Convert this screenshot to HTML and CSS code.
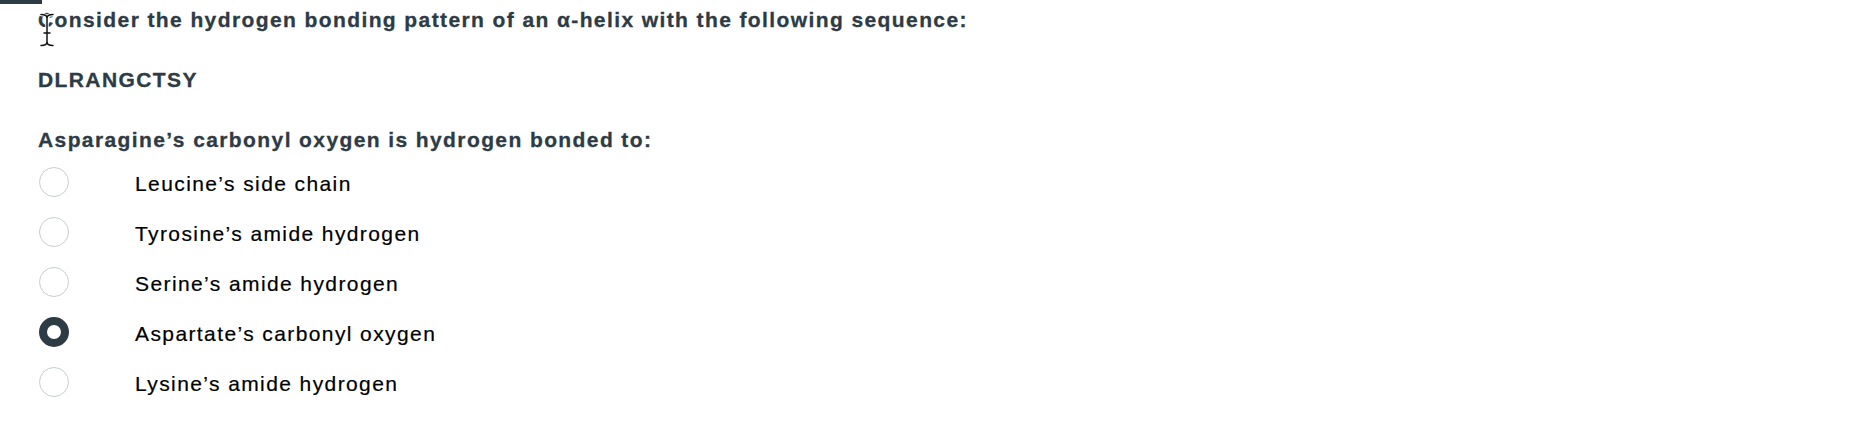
FILE: index.html
```html
<!DOCTYPE html>
<html lang="en">
<head>
<meta charset="utf-8">
<title>Question</title>
<link rel="stylesheet" href="styles.css">
</head>
<body>
<div class="topbar"></div>
<div class="question">
  <p class="q-text">Consider the hydrogen bonding pattern of an α-helix with the following sequence:</p>
  <p class="q-text">DLRANGCTSY</p>
  <p class="q-text">Asparagine’s carbonyl oxygen is hydrogen bonded to:</p>
  <ul class="options">
    <li class="option"><span class="radio"></span><span class="label">Leucine’s side chain</span></li>
    <li class="option"><span class="radio"></span><span class="label">Tyrosine’s amide hydrogen</span></li>
    <li class="option"><span class="radio"></span><span class="label">Serine’s amide hydrogen</span></li>
    <li class="option"><span class="radio checked"></span><span class="label">Aspartate’s carbonyl oxygen</span></li>
    <li class="option"><span class="radio"></span><span class="label">Lysine’s amide hydrogen</span></li>
  </ul>
  <svg class="cursor" width="18" height="36" viewBox="0 0 18 36" aria-hidden="true">
    <g fill="none" stroke="#fff" stroke-width="3.4" stroke-linecap="round">
      <path d="M3 2.5 Q9 2.5 9 6 Q9 2.5 15 2.5"/>
      <path d="M9 6 V30"/>
      <path d="M3 33.5 Q9 33.5 9 30 Q9 33.5 15 33.5"/>
      <path d="M6 21 H12"/>
    </g>
    <g fill="none" stroke="#111" stroke-width="1.5" stroke-linecap="round">
      <path d="M3 2.5 Q9 2.5 9 6 Q9 2.5 15 2.5"/>
      <path d="M9 6 V30"/>
      <path d="M3 33.5 Q9 33.5 9 30 Q9 33.5 15 33.5"/>
      <path d="M6 21 H12"/>
    </g>
  </svg>
</div>
</body>
</html>
```

FILE: styles.css
```css
html, body {
  margin: 0;
  padding: 0;
  background: #fff;
}

body {
  font-family: "Liberation Sans", Arial, Helvetica, sans-serif;
  font-size: 21px;
  letter-spacing: 1.4px;
}

.topbar {
  width: 42px;
  height: 4px;
  background: #2d3b45;
}

.question {
  position: relative;
  padding: 1px 0 0 38px;
}

.q-text {
  margin: 0 0 30px 0;
  line-height: 30px;
  font-weight: bold;
  color: #2d3b45;
  -webkit-text-stroke: 0.3px #2d3b45;
}

.q-text:nth-of-type(3) {
  margin-bottom: 2px;
}

.options {
  list-style: none;
  margin: 0;
  padding: 0;
}

.option {
  display: flex;
  align-items: center;
  height: 50px;
  gap: 66px;
}

.radio {
  box-sizing: border-box;
  width: 30px;
  height: 30px;
  margin-left: 1px;
  border-radius: 50%;
  border: 1px solid #c7cdd1;
  background: #fff;
  flex: none;
}

.radio.checked {
  border: 8px solid #2d3b45;
}

.label {
  line-height: 30px;
  padding-top: 4px;
  color: #000;
  -webkit-text-stroke: 0.2px #000;
}

.cursor {
  position: absolute;
  left: 38px;
  top: 8px;
}
```
